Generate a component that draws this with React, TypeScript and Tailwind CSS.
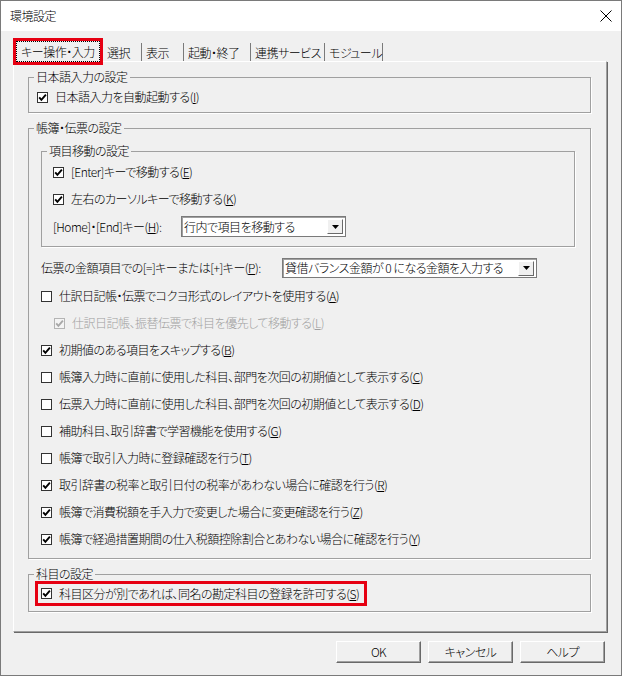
import type { ReactNode } from "react";

type Item = { label: string; k: string; checked?: boolean; disabled?: boolean; indent?: boolean };

const items: Item[] = [
  { label: "仕訳日記帳・伝票でコクヨ形式のレイアウトを使用する", k: "A" },
  { label: "仕訳日記帳、振替伝票で科目を優先して移動する", k: "L", checked: true, disabled: true, indent: true },
  { label: "初期値のある項目をスキップする", k: "B", checked: true },
  { label: "帳簿入力時に直前に使用した科目、部門を次回の初期値として表示する", k: "C" },
  { label: "伝票入力時に直前に使用した科目、部門を次回の初期値として表示する", k: "D" },
  { label: "補助科目、取引辞書で学習機能を使用する", k: "G" },
  { label: "帳簿で取引入力時に登録確認を行う", k: "T" },
  { label: "取引辞書の税率と取引日付の税率があわない場合に確認を行う", k: "R", checked: true },
  { label: "帳簿で消費税額を手入力で変更した場合に変更確認を行う", k: "Z", checked: true },
  { label: "帳簿で経過措置期間の仕入税額控除割合とあわない場合に確認を行う", k: "Y", checked: true },
];

const tabs = [
  { name: "選択", w: "w-[39px]" },
  { name: "表示", w: "w-[42px]" },
  { name: "起動・終了", w: "w-[67px]" },
  { name: "連携サービス", w: "w-[74px]" },
  { name: "モジュール", w: "w-[58px]" },
];

function Box({ checked, disabled }: { checked?: boolean; disabled?: boolean }) {
  return (
    <span
      className={`flex h-[11px] w-[11px] shrink-0 items-center justify-center border ${
        disabled ? "border-[#b4b4b4] bg-[#f4f4f4]" : "border-[#333333] bg-white"
      }`}
    >
      {checked && (
        <svg width="9" height="9" viewBox="0 0 9 9">
          <path
            d="M1.2 4.3 L3.4 6.8 L7.9 1.6"
            fill="none"
            stroke={disabled ? "#a8a8a8" : "#000"}
            strokeWidth="1.9"
          />
        </svg>
      )}
    </span>
  );
}

function Check({ label, k, checked, disabled, indent }: Item) {
  return (
    <div
      className={`flex h-[14px] items-center gap-[7px] ${indent ? "ml-[13px]" : ""} ${
        disabled ? "text-[#a0a0a0]" : ""
      }`}
    >
      <Box checked={checked} disabled={disabled} />
      <span className="whitespace-nowrap">
        {label}(<u>{k}</u>)
      </span>
    </div>
  );
}

function Group({ title, className, children }: { title: string; className?: string; children: ReactNode }) {
  return (
    <fieldset className={`border border-[#a0a0a0] shadow-[1px_1px_0_#ffffff] ${className ?? ""}`}>
      <legend className="ml-[5px] px-[2px] leading-[14px]">{title}</legend>
      {children}
    </fieldset>
  );
}

function Combo({ value, className }: { value: string; className: string }) {
  return (
    <div
      className={`flex items-center justify-between border border-[#7a7a7a] bg-white pl-[2px] pr-[2px] shadow-[inset_1px_1px_0_#a0a0a0] ${className}`}
    >
      <span className="whitespace-nowrap">{value}</span>
      <span className="flex h-[15px] w-[16px] items-center justify-center border border-t-white border-l-white border-r-[#696969] border-b-[#696969] bg-[#f0f0f0]">
        <svg width="7" height="4" viewBox="0 0 7 4">
          <polygon points="0,0 7,0 3.5,4" fill="#000" />
        </svg>
      </span>
    </div>
  );
}

function Btn({ children }: { children: ReactNode }) {
  return (
    <button className="h-[22px] w-[85px] border border-t-white border-l-white border-r-[#696969] border-b-[#696969] bg-[#f0f0f0] leading-[14px] shadow-[inset_-1px_-1px_0_#a0a0a0]">
      {children}
    </button>
  );
}

export default function App() {
  return (
    <div className="flex h-[676px] w-[622px] flex-col border border-[#7a7a7a] bg-[#f0f0f0] font-['Noto_Sans_CJK_JP',sans-serif] text-[12px] font-light leading-[14px] tracking-[-0.5px] text-black [font-feature-settings:'palt']">
      {/* title bar */}
      <div className="flex h-[30px] shrink-0 items-center justify-between bg-white pl-[9px] pr-[9px]">
        <span>環境設定</span>
        <svg width="12" height="12" viewBox="0 0 12 12">
          <path d="M0.5 0.5 L11.5 11.5 M11.5 0.5 L0.5 11.5" stroke="#000" strokeWidth="1" />
        </svg>
      </div>

      <div className="flex flex-1 flex-col pl-[12px] pr-[14px]">
        {/* tabs */}
        <div className="mt-[7px] flex h-[23px] items-start">
          <div className="relative z-10 -mb-[4px] h-[27px] w-[90px] border-[3px] border-[#e60012] bg-[#f0f0f0]">
            <div className="flex h-full items-center justify-center border border-dotted border-black">
              キー操作・入力
            </div>
          </div>
          {tabs.map((t) => (
            <div
              key={t.name}
              className={`mt-[5px] flex h-[19px] items-center whitespace-nowrap border-r border-[#7a7a7a] pl-[4px] ${t.w}`}
            >
              {t.name}
            </div>
          ))}
        </div>

        {/* panel */}
        <div className="flex flex-col gap-[8px] border border-t-white border-l-white border-r-[#a0a0a0] border-b-[#a0a0a0] pb-[19px] pl-[14px] pr-[15px] pt-[8px] shadow-[1px_1px_0_#696969]">
          <Group title="日本語入力の設定">
            <div className="pb-[8px] pl-[8px] pt-[6px]">
              <Check label="日本語入力を自動起動する" k="I" checked />
            </div>
          </Group>

          <Group title="帳簿・伝票の設定">
            <div className="flex flex-col pb-[12px] pl-[12px] pr-[15px] pt-[9px]">
              <Group title="項目移動の設定">
                <div className="flex flex-col pb-[9px] pl-[11px] pt-[7px]">
                  <Check label="[Enter]キーで移動する" k="E" checked />
                  <div className="mt-[13px]">
                    <Check label="左右のカーソルキーで移動する" k="K" checked />
                  </div>
                  <div className="mt-[10px] flex items-center">
                    <span className="w-[128px] whitespace-nowrap">
                      [Home]・[End]キー(<u>H</u>):
                    </span>
                    <Combo value="行内で項目を移動する" className="h-[21px] w-[165px]" />
                  </div>
                </div>
              </Group>

              <div className="mt-[11px] flex items-center">
                <span className="w-[241px] whitespace-nowrap">
                  伝票の金額項目での[=]キーまたは[+]キー(<u>P</u>):
                </span>
                <Combo value="貸借バランス金額が 0 になる金額を入力する" className="h-[20px] w-[255px]" />
              </div>

              <div className="mt-[11px] flex flex-col gap-[13px]">
                {items.map((it) => (
                  <Check key={it.k} {...it} />
                ))}
              </div>
            </div>
          </Group>

          <Group title="科目の設定">
            <div className="pb-[5px] pl-[6px]">
              <div className="flex h-[25px] w-[332px] items-center border-[3px] border-[#e60012] pl-[3px]">
                <Check label="科目区分が別であれば、同名の勘定科目の登録を許可する" k="S" checked />
              </div>
            </div>
          </Group>
        </div>

        {/* buttons */}
        <div className="mt-[9px] flex justify-end gap-[7px] pr-[2px]">
          <Btn>OK</Btn>
          <Btn>キャンセル</Btn>
          <Btn>ヘルプ</Btn>
        </div>
      </div>
    </div>
  );
}
